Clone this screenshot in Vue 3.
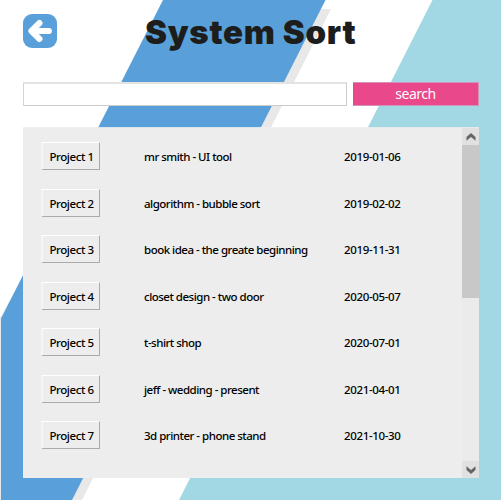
<script setup>
import { ref } from 'vue'

const query = ref('')
const projects = [
  { id: 1, title: 'mr smith - UI tool', date: '2019-01-06' },
  { id: 2, title: 'algorithm - bubble sort', date: '2019-02-02' },
  { id: 3, title: 'book idea - the greate beginning', date: '2019-11-31' },
  { id: 4, title: 'closet design - two door', date: '2020-05-07' },
  { id: 5, title: 't-shirt shop', date: '2020-07-01' },
  { id: 6, title: 'jeff - wedding - present', date: '2021-04-01' },
  { id: 7, title: '3d printer - phone stand', date: '2021-10-30' }
]
</script>

<template>
  <main class="page">
    <svg class="backdrop" viewBox="0 0 501 500" aria-hidden="true">
      <path d="M172 9H331L82 500H0V318Z" fill="#e8e8e8" />
      <path d="M163 0H325.5L72 500H1V318.500Z" fill="#599fd9" />
      <path d="M432.500 0H501V500H179Z" fill="#a2d7e4" />
    </svg>

    <header class="header">
      <button class="back" aria-label="Back">
        <svg viewBox="0 0 34 34" width="34" height="34">
          <path d="M16.500 9L8.400 17L16.500 25" fill="none" stroke="#fff" stroke-width="6" stroke-linecap="round" stroke-linejoin="round" />
          <path d="M10 17H26" fill="none" stroke="#fff" stroke-width="5.800" stroke-linecap="round" />
        </svg>
      </button>
      <h1 class="title">System Sort</h1>
    </header>

    <form class="search" @submit.prevent>
      <input v-model="query" class="field" type="text" aria-label="Search" />
      <button class="submit">search</button>
    </form>

    <section class="panel">
      <ul class="list">
        <li v-for="p in projects" :key="p.id" class="row">
          <button class="project">Project {{ p.id }}</button>
          <span class="name">{{ p.title }}</span>
          <span class="date">{{ p.date }}</span>
        </li>
      </ul>
      <div class="scrollbar">
        <div class="arrow">
          <svg viewBox="0 0 10 8" width="10" height="8"><path d="M5 0L9.500 4V7.800L5 4L.5 7.800V4Z" fill="#666" /></svg>
        </div>
        <div class="thumb"></div>
        <div class="arrow end">
          <svg viewBox="0 0 10 8" width="10" height="8"><path d="M5 8L9.500 4V.2L5 4L.5 .2V4Z" fill="#666" /></svg>
        </div>
      </div>
    </section>
  </main>
</template>

<style>
body { margin: 0; background: #fff; overflow: hidden; }
</style>

<style scoped>
.page {
  position: relative;
  box-sizing: border-box;
  width: 501px;
  height: 500px;
  padding: 14px 22px 0 23px;
  overflow: hidden;
  font-family: "Noto Sans", "Open Sans", sans-serif;
  color: #000;
}
.backdrop { position: absolute; inset: 0; width: 501px; height: 500px; z-index: -1; }
button { padding: 0; border: 0; font: inherit; color: inherit; }
.header { display: flex; height: 68px; }
.back { flex: none; width: 34px; height: 34px; border-radius: 9px; background: #599fd9; }
.back svg { display: block; }
.title {
  margin: 0 0 0 88px;
  font: 900 33px/36px Inter, sans-serif;
  letter-spacing: .7px;
  white-space: nowrap;
  color: #1d1d1b;
}
.search { display: flex; gap: 6px; height: 24px; margin-bottom: 21px; }
.field {
  box-sizing: border-box;
  width: 324px;
  height: 24px;
  padding: 0 6px;
  border: 1px solid #ccc;
  border-top: 2px solid #e3e3e3;
  border-left-color: #d4d4d4;
  outline: 0;
  background: #fff;
}
.submit {
  box-sizing: border-box;
  width: 126px;
  height: 24px;
  border: solid #d291b6;
  border-width: 1px 1px 1px 0;
  background: #e9488b;
  color: #fff;
  font-size: 14px;
  line-height: 20px;
  letter-spacing: -.5px;
}
.panel {
  box-sizing: border-box;
  display: flex;
  justify-content: space-between;
  height: 351px;
  border-top: 1px solid #eeeeeee0;
  background: #ededed;
  background-clip: padding-box;
}
.list { margin: 0; padding: 14px 0 0 18px; list-style: none; }
.row {
  display: grid;
  grid-template-columns: 103px 200px 70px;
  height: 46.500px;
  font-size: 11.500px;
  font-weight: 500;
  line-height: 30px;
  white-space: nowrap;
}
.project {
  box-sizing: border-box;
  width: 59px;
  height: 28px;
  padding: 2px 0 0 1px;
  border: solid;
  border-width: 1px 1px 1px 2px;
  border-color: #fff #aaa #aaa #f5f5f5;
  line-height: 24px;
  background: #ededed;
  letter-spacing: -.42px;
}
.name { letter-spacing: -.5px; }
.date { letter-spacing: -.35px; }
.scrollbar { display: flex; flex-direction: column; width: 17px; background: #ebebeb; }
.arrow { display: flex; align-items: center; justify-content: center; height: 17px; background: #e1e1e1; }
.thumb { height: 153px; background: #c8c8c8; }
.end { margin-top: auto; }
</style>
